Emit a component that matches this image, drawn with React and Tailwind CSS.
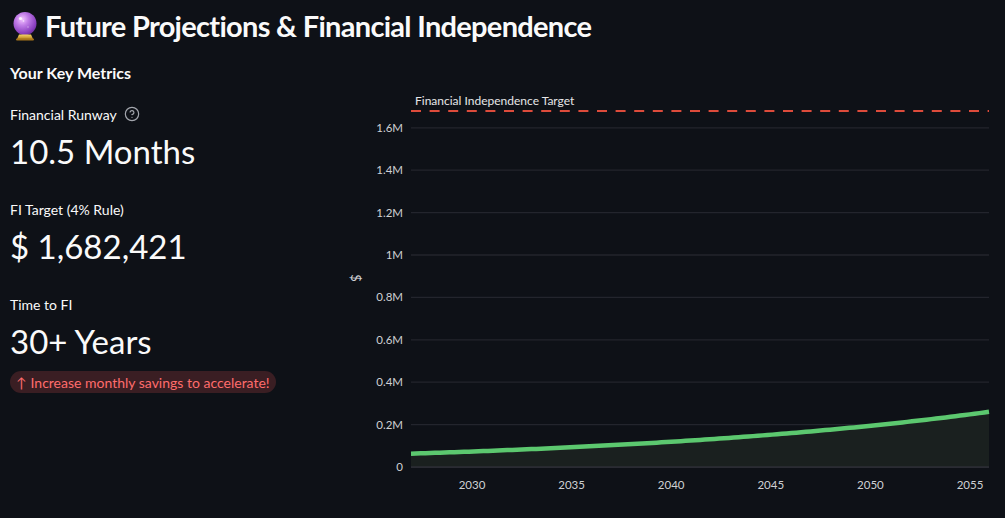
import React from "react";

const FONT = { fontFamily: "Lato, 'Noto Sans', 'Liberation Sans', sans-serif" };

function CrystalBall() {
  return (
    <svg width="28" height="32" viewBox="0 0 28 32" className="shrink-0">
      <defs>
        <radialGradient id="ball" cx="0.38" cy="0.32" r="0.75">
          <stop offset="0" stopColor="#f3c6ff" />
          <stop offset="0.35" stopColor="#c27ee8" />
          <stop offset="0.8" stopColor="#8a3fc0" />
          <stop offset="1" stopColor="#6a2a9a" />
        </radialGradient>
        <linearGradient id="base" x1="0" y1="0" x2="0" y2="1">
          <stop offset="0" stopColor="#f7d36a" />
          <stop offset="1" stopColor="#b9861f" />
        </linearGradient>
      </defs>
      <circle cx="14" cy="13.5" r="11.5" fill="url(#ball)" />
      <circle cx="9.5" cy="8.5" r="1.6" fill="#fff" opacity="0.85" />
      <circle cx="12.5" cy="11" r="0.8" fill="#fff" opacity="0.7" />
      <circle cx="17" cy="17" r="0.7" fill="#fff" opacity="0.5" />
      <path d="M8 24.5 L20 24.5 L22 29 L6 29 Z" fill="url(#base)" />
      <rect x="5" y="28.5" width="18" height="2" rx="1" fill="#a8761a" />
    </svg>
  );
}

function HelpIcon() {
  return (
    <svg width="16" height="16" viewBox="0 0 24 24" fill="none" stroke="#a3a6ad" strokeWidth="1.8" strokeLinecap="round" strokeLinejoin="round">
      <circle cx="12" cy="12" r="10" />
      <path d="M9.1 9a3 3 0 0 1 5.82 1c0 2-3 3-3 3" />
      <path d="M12 17h.01" />
    </svg>
  );
}

function Chart() {
  const W = 665;
  const H = 430;
  const left = 71;
  const right = 649;
  const xOf = (yr) => 472 - 340 + (yr - 2030) * 19.92;
  const yOf = (v) => 379 - 212 * v;
  const val = (yr) => 0.063 * Math.exp(0.049 * (yr - 2027));
  const startYr = 2030 - (472 - 411) / 19.92;
  const endYr = 2030 + (989 - 472) / 19.92;
  const pts = [];
  for (let i = 0; i <= 120; i++) {
    const yr = startYr + ((endYr - startYr) * i) / 120;
    pts.push([xOf(yr), yOf(val(yr))]);
  }
  const line = pts.map((p, i) => `${i ? "L" : "M"}${p[0].toFixed(2)},${p[1].toFixed(2)}`).join(" ");
  const area = `${line} L${right},${yOf(0)} L${left},${yOf(0)} Z`;
  const yTicks = [
    [1.6, "1.6M"],
    [1.4, "1.4M"],
    [1.2, "1.2M"],
    [1.0, "1M"],
    [0.8, "0.8M"],
    [0.6, "0.6M"],
    [0.4, "0.4M"],
    [0.2, "0.2M"],
    [0, "0"],
  ];
  const xTicks = [2030, 2035, 2040, 2045, 2050, 2055];
  return (
    <svg width={W} height={H} viewBox={`0 0 ${W} ${H}`} style={FONT}>
      {yTicks.map(([v, l]) => (
        <g key={l}>
          <line x1={left} x2={right} y1={yOf(v)} y2={yOf(v)} stroke={v === 0 ? "#2c2e36" : "#23252d"} strokeWidth="1.3" />
          <text x="63" y={yOf(v) + 4} textAnchor="end" fontSize="11.5" fill="#cfd0d3">
            {l}
          </text>
        </g>
      ))}
      <path d={area} fill="#1a201f" />
      <line x1={left} x2={right} y1={yOf(0)} y2={yOf(0)} stroke="#2c2e36" strokeWidth="1.3" />
      <path d={line} fill="none" stroke="#5cc86f" strokeWidth="4.5" strokeLinejoin="round" />
      {xTicks.map((t) => (
        <text key={t} x={xOf(t)} y="401" textAnchor="middle" fontSize="11.5" fill="#cfd0d3">
          {t}
        </text>
      ))}
      <text x="14" y="190" fontSize="13" fill="#cfd0d3" textAnchor="middle" transform="rotate(90 14 190)" dominantBaseline="middle">
        $
      </text>
      <line x1={left} x2={right} y1="23" y2="23" stroke="#dd4b3b" strokeWidth="2" strokeDasharray="10 8.6" />
      <text x="75" y="17" fontSize="12" fill="#e6e6e8">
        Financial Independence Target
      </text>
    </svg>
  );
}

function Metric({ label, value, help }) {
  return (
    <div className="flex flex-col">
      <div className="flex h-[20px] items-center gap-[7px] text-[14px] text-[#fafafa]">
        <span>{label}</span>
        {help && <HelpIcon />}
      </div>
      <div className="mt-[4px] h-[46px] text-[33px] leading-[46px] text-[#fafafa]">{value}</div>
    </div>
  );
}

export default function App() {
  return (
    <div className="h-[518px] w-[1005px] overflow-hidden bg-[#0e1117] text-[#fafafa]" style={FONT}>
      <div className="flex h-[44px] items-center gap-[6px] pl-[11px] pt-[8px]">
        <CrystalBall />
        <h1 className="text-[29px] font-bold leading-[44px] tracking-[-0.7px]">Future Projections &amp; Financial Independence</h1>
      </div>
      <div className="flex">
        <div className="flex w-[340px] shrink-0 flex-col pl-[10px]">
          <div className="mt-[17px] h-[24px] text-[16px] font-bold leading-[24px]">Your Key Metrics</div>
          <div className="mt-[19px] flex flex-col gap-[25px]">
            <Metric label="Financial Runway" value="10.5 Months" help />
            <Metric label="FI Target (4% Rule)" value="$ 1,682,421" />
            <div className="flex flex-col">
              <Metric label="Time to FI" value="30+ Years" />
              <div className="mt-[7px] flex h-[22px] w-fit items-center gap-[4px] rounded-full bg-[#3a1e23] px-[6px] text-[14px] text-[#ff6c6c]">
                <span>↑</span>
                <span>Increase monthly savings to accelerate!</span>
              </div>
            </div>
          </div>
        </div>
        <div className="mt-[44px] flex-1">
          <Chart />
        </div>
      </div>
    </div>
  );
}
